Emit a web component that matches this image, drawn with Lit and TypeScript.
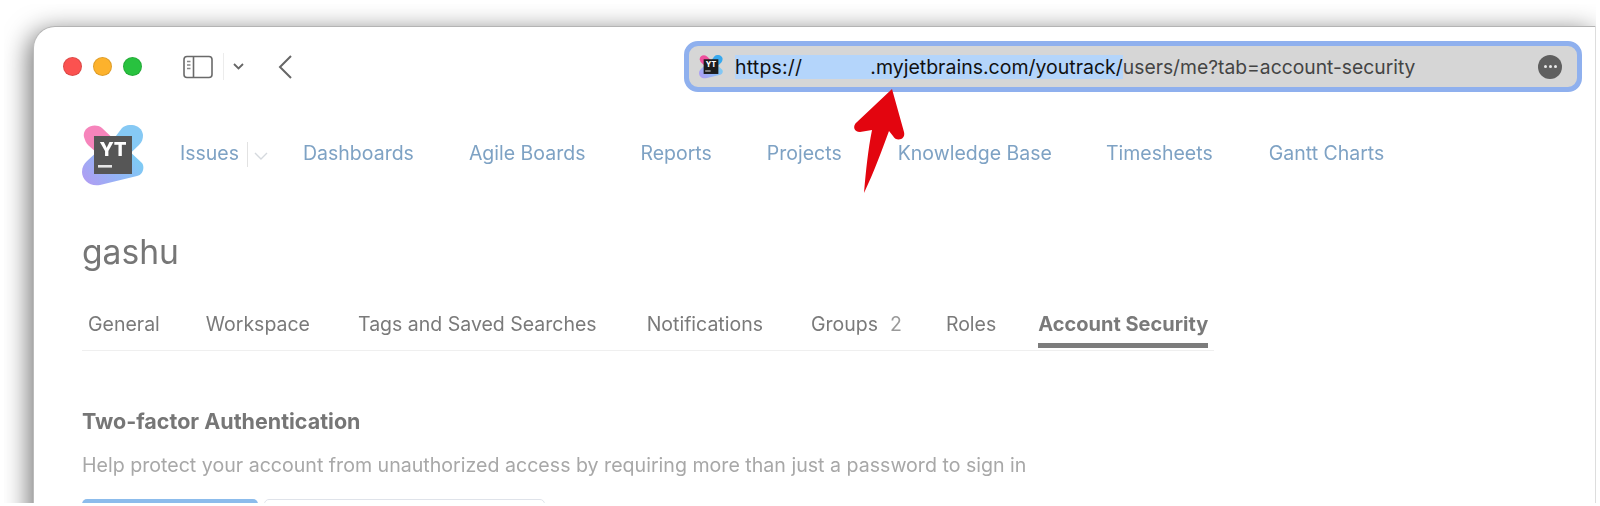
import { LitElement, html, css } from "lit";
import { customElement } from "lit/decorators.js";

const logo = (size: number, small = false) => html`
  <svg class="logo" width=${size} height=${size} viewBox="0 0 62 62" aria-hidden="true">
    <defs>
      <linearGradient id=${small ? "gs" : "gl"} x1="0" y1="1" x2="1" y2="0.5">
        <stop offset="0" stop-color="#b49af2" />
        <stop offset="0.55" stop-color="#94b4f6" />
        <stop offset="1" stop-color="#7fcaf4" />
      </linearGradient>
    </defs>
    <path d="M2 12 C0 3 12 -3 20 3 L40 22 L24 36 L6 20 C4 18 3 15 2 12 Z" fill=${small ? "#ee4f9d" : "#f684bb"} />
    <path d="M40 3 C47 -3 60 0 61 10 C61 14 60 17 57 20 L36 40 L24 24 Z" fill=${small ? "#38a8ee" : "#86c9f4"} />
    <path d="M18 24 L40 24 L45 24 L60 38 C63 42 61 50 55 51 L18 60 C8 62 0 55 0 47 C0 42 2 39 5 36 Z" fill="url(#${small ? "gs" : "gl"})" />
    <rect x="12" y="11" width="38" height="38" fill=${small ? "#1c1c1c" : "#565656"} />
    <rect x="16" y="40" width="14" height="2.6" fill="#fff" opacity=".85" />
    <text x="31" y="31" text-anchor="middle" font-family="Inter, sans-serif" font-size="19" font-weight="800" fill="#fff">YT</text>
  </svg>`;

@customElement("app-root")
export class AppRoot extends LitElement {
  static styles = css`
    :host { display: block; height: 506px; overflow: hidden; background: #fff; font-family: Inter, "Liberation Sans", sans-serif; }
    .stage { position: relative; height: 499px; margin: 4px 4px 3px; padding: 22px 0 0 29px; box-sizing: border-box; overflow: hidden; background: #fff; }
    .window { height: 520px; background: #fff; border-radius: 22px 0 0 0; border-top: 1px solid #b4b4b4; border-left: 1px solid #bbb; border-right: 1px solid #ddd; box-sizing: border-box; box-shadow: -4px 5px 26px rgba(0,0,0,.55); padding: 0 12px 0 48px; filter: blur(.35px); }
    .toolbar { display: flex; align-items: center; height: 65px; margin-left: -19px; padding-top: 7px; }
    .lights { display: flex; gap: 11px; }
    .light { width: 19px; height: 19px; border-radius: 50%; box-sizing: border-box; border: 1px solid rgba(0,0,0,.12); }
    .red { background: #fb5250; } .yellow { background: #fdb22c; } .green { background: #28c23f; }
    .side { margin-left: 41px; display: block; }
    .sep { width: 1px; height: 27px; background: #ececec; margin: 0 8px 0 10px; }
    .caret { display: block; }
    .back { display: block; margin-left: 32px; }
    .address { box-sizing: border-box; margin-left: 391px; width: 898px; height: 51px; display: flex; align-items: center; border: 5px solid #8fb0ee; border-radius: 14px; background: #d6d6d6; padding: 0 15px 0 10px; font-size: 19.5px; color: #444; }
    .selected { background: #b4d5fb; color: #111; line-height: 24px; height: 24px; margin-left: 12px; white-space: pre; display: flex; }
    .scheme { letter-spacing: .2px; }
    .hidden { width: 68px; }
    .rest { line-height: 24px; font-size: 19.3px; }
    .more { margin-left: auto; width: 24px; height: 24px; border-radius: 50%; background: #5f5f5f; display: flex; align-items: center; justify-content: center; gap: 2px; }
    .more i { width: 3px; height: 3px; border-radius: 50%; background: #e8e8e8; }
    .nav { display: flex; align-items: center; height: 62px; margin-top: 26px; font-size: 19.5px; color: #7ea2c4; }
    .nav .logo { margin-right: 36px; }
    .nav a { margin: -7px 55px 0 0; white-space: nowrap; }
    .nav a.issues { margin-right: 0; }
    .nav a.wide { margin-right: 56px; }
    .nav a.kb { margin-right: 54px; }
    .navsep { width: 1px; height: 25px; background: #e2e2e2; margin: -4px 6px 0 8px; }
    .navcaret { margin-right: 35px; }
    h1 { margin: 43px 0 0; font-size: 33.6px; line-height: 44px; font-weight: 400; color: #767676; }
    .tabs { display: flex; height: 44px; margin-top: 33px; width: 1132px; border-bottom: 1px solid #efefef; box-sizing: border-box; color: #7a7a7a; font-size: 19.5px; padding-left: 6px; }
    .tab { height: 34px; line-height: 34px; white-space: nowrap; box-sizing: border-box; }
    .tab:nth-child(1) { margin-right: 46px; }
    .tab:nth-child(2) { margin-right: 48px; }
    .tab:nth-child(3) { margin-right: 50px; }
    .tab:nth-child(4) { margin-right: 48px; }
    .tab:nth-child(5) { margin-right: 44px; }
    .tab:nth-child(6) { margin-right: 42px; }
    .tab.active { font-weight: 700; font-size: 20px; border-bottom: 5px solid #7c7c7c; height: 41px; }
    .count { color: #9a9a9a; margin-left: 12px; }
    h2 { margin: 57px 0 0; font-size: 21.5px; line-height: 26px; font-weight: 700; color: #767676; }
    p { margin: 18px 0 0; font-size: 19.6px; line-height: 26px; color: #a8a8a8; }
    .buttons { display: flex; gap: 6px; margin-top: 21px; }
    .primary { width: 176px; height: 30px; background: #8cbcec; border-radius: 5px; }
    .secondary { width: 281px; height: 30px; border: 1px solid #dfe3ea; border-radius: 5px; box-sizing: border-box; }
    .arrow { position: absolute; left: 0; top: 0; pointer-events: none; }
  `;

  render() {
    return html`
      <div class="stage">
        <div class="window">
          <div class="toolbar">
            <div class="lights"><span class="light red"></span><span class="light yellow"></span><span class="light green"></span></div>
            <svg class="side" width="30" height="24" viewBox="0 0 30 24" fill="none" stroke="#6a6a6a" stroke-width="1.6">
              <rect x="1" y="1.5" width="28" height="21" rx="3" />
              <path d="M10.5 1.5 V22.5" />
              <path d="M4 6.5 H7.5 M4 10 H7.5 M4 13.5 H7.5" stroke-width="1.3" stroke="#888" />
            </svg>
            <span class="sep"></span>
            <svg class="caret" width="13" height="9" viewBox="0 0 13 9" fill="none" stroke="#666" stroke-width="1.8"><path d="M2 2 L6.5 6.5 L11 2" /></svg>
            <svg class="back" width="16" height="26" viewBox="0 0 16 26" fill="none" stroke="#666" stroke-width="2"><path d="M14 2 L3 13 L14 24" /></svg>
            <div class="address">
              ${logo(24, true)}
              <span class="selected"><span class="scheme">https://</span><span class="hidden"></span><span>.myjetbrains.com/youtrack/</span></span><span class="rest">users/me?tab=account-security</span>
              <span class="more"><i></i><i></i><i></i></span>
            </div>
          </div>
          <div class="nav">
            ${logo(62)}
            <a class="issues">Issues</a><span class="navsep"></span>
            <svg class="navcaret" width="14" height="8" viewBox="0 0 14 8" fill="none" stroke="#d5d9de" stroke-width="1.4"><path d="M1 1 L7 7 L13 1" /></svg>
            <a>Dashboards</a><a>Agile Boards</a><a>Reports</a><a class="wide">Projects</a><a class="kb">Knowledge Base</a><a class="wide">Timesheets</a><a>Gantt Charts</a>
          </div>
          <h1>gashu</h1>
          <div class="tabs">
            <span class="tab">General</span><span class="tab">Workspace</span><span class="tab">Tags and Saved Searches</span><span class="tab">Notifications</span><span class="tab">Groups<span class="count">2</span></span><span class="tab">Roles</span><span class="tab active">Account Security</span>
          </div>
          <h2>Two-factor Authentication</h2>
          <p>Help protect your account from unauthorized access by requiring more than just a password to sign in</p>
          <div class="buttons"><div class="primary"></div><div class="secondary"></div></div>
        </div>
        <svg class="arrow" width="1592" height="499" viewBox="4 4 1592 499">
          <path d="M892 89 L904 132 C906 140 896 142 893 136 L889 131 C882 150 874 172 864 193 C866 170 868 150 872 130 L860 132 C854 132 852 126 857 122 Z" fill="#e3050f" />
        </svg>
      </div>
    `;
  }
}
